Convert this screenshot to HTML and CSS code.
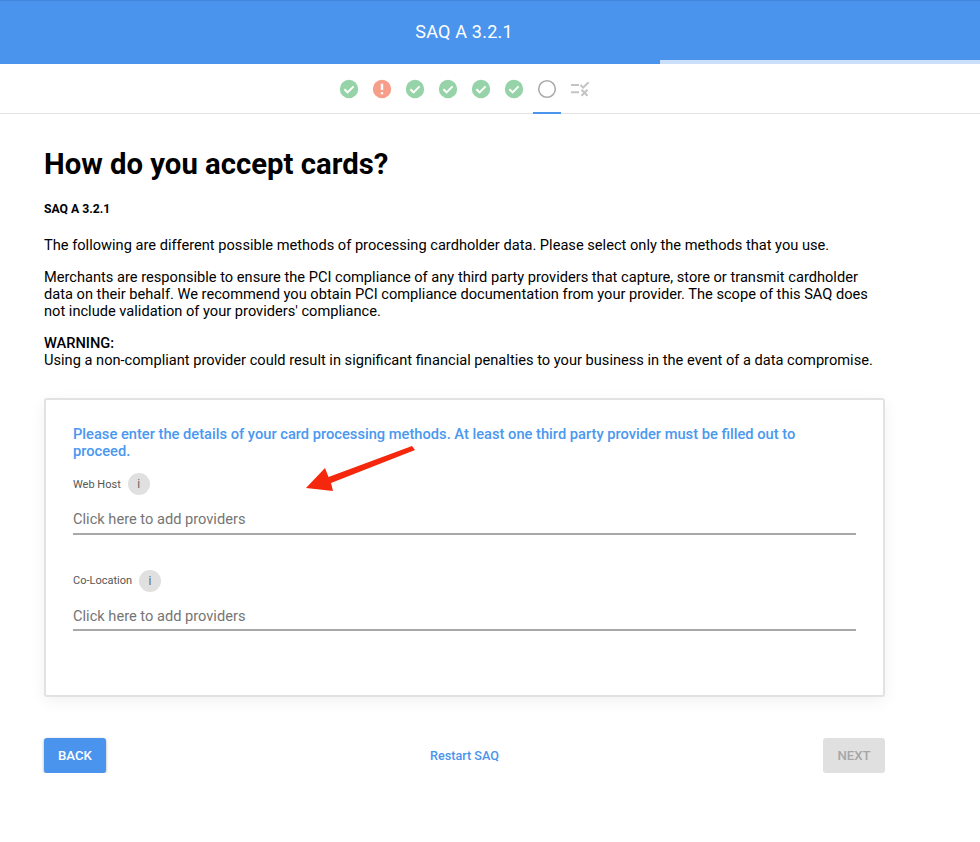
FILE: index.html
```html
<!DOCTYPE html>
<html lang="en">
<head>
    <meta charset="UTF-8">
    <meta name="viewport" content="width=device-width, initial-scale=1.0">
    <title>SAQ A 3.2.1</title>
    <link rel="stylesheet" href="styles.css">
</head>
<body>
    <header class="topbar">
        <div class="topbar-title">SAQ A 3.2.1</div>
        <div class="progress"><div class="progress-done"></div></div>
    </header>

    <nav class="stepper">
        <div class="step"><svg class="step-icon" viewBox="0 0 20 20"><circle class="fill-ok" cx="10" cy="10" r="9.2"/><path class="tick" d="M5.400 10.200l3.200 3.200 6-6"/></svg></div>
        <div class="step"><svg class="step-icon" viewBox="0 0 20 20"><circle class="fill-err" cx="10" cy="10" r="9.2"/><path class="bang" d="M10 4.800v6.200M10 13.200v2"/></svg></div>
        <div class="step"><svg class="step-icon" viewBox="0 0 20 20"><circle class="fill-ok" cx="10" cy="10" r="9.2"/><path class="tick" d="M5.400 10.200l3.200 3.200 6-6"/></svg></div>
        <div class="step"><svg class="step-icon" viewBox="0 0 20 20"><circle class="fill-ok" cx="10" cy="10" r="9.2"/><path class="tick" d="M5.400 10.200l3.200 3.200 6-6"/></svg></div>
        <div class="step"><svg class="step-icon" viewBox="0 0 20 20"><circle class="fill-ok" cx="10" cy="10" r="9.2"/><path class="tick" d="M5.400 10.200l3.200 3.200 6-6"/></svg></div>
        <div class="step"><svg class="step-icon" viewBox="0 0 20 20"><circle class="fill-ok" cx="10" cy="10" r="9.2"/><path class="tick" d="M5.400 10.200l3.200 3.200 6-6"/></svg></div>
        <div class="step step-current"><svg class="step-icon" viewBox="0 0 20 20"><circle class="ring" cx="10" cy="10" r="8.300"/></svg></div>
        <div class="step"><svg class="step-icon" viewBox="0 0 20 20"><path class="review" d="M1 6h8M1 13.300h8M10.500 6l2.600 2.600 5.500-5.300M11.500 10.800l6 6M17.500 10.800l-6 6"/></svg></div>
    </nav>

    <main class="content">
        <h1>How do you accept cards?</h1>
        <h5>SAQ A 3.2.1</h5>
        <p>The following are different possible methods of processing cardholder data. Please select only the methods that you use.</p>
        <p>Merchants are responsible to ensure the PCI compliance of any third party providers that capture, store or transmit cardholder data on their behalf. We recommend you obtain PCI compliance documentation from your provider. The scope of this SAQ does not include validation of your providers' compliance.</p>
        <p><strong>WARNING:</strong><br>Using a non-compliant provider could result in significant financial penalties to your business in the event of a data compromise.</p>

        <section class="card">
            <div class="card-intro">Please enter the details of your card processing methods. At least one third party provider must be filled out to proceed.</div>

            <div class="field">
                <div class="field-label">Web Host <span class="info">i</span></div>
                <div class="field-input">Click here to add providers</div>
            </div>

            <div class="field">
                <div class="field-label">Co-Location <span class="info">i</span></div>
                <div class="field-input">Click here to add providers</div>
            </div>

            <svg class="arrow" viewBox="0 0 112 48"><path d="M1 43L20 23l3.500 9L107 1l3 4-84 33 2 8z"/></svg>
        </section>

        <div class="actions">
            <a href="#" class="btn btn-back">BACK</a>
            <a href="#" class="restart">Restart SAQ</a>
            <a href="#" class="btn btn-next">NEXT</a>
        </div>
    </main>
</body>
</html>
```

FILE: styles.css
```css
body {
    font-family: Roboto, "Liberation Sans", sans-serif;
    background-color: #fff;
    color: #000;
    margin: 0;
    padding: 0;
}
.topbar {
    background-color: #4a94ed;
    height: 64px;
    box-sizing: border-box;
    border-top: 1px solid #4286dc;
    position: relative;
}
.topbar-title {
    color: #fff;
    font-size: 18px;
    line-height: 61px;
    text-align: center;
    letter-spacing: 0.2px;
    padding-right: 52px;
}
.progress {
    position: absolute;
    left: 0;
    right: 0;
    bottom: 0;
    height: 4px;
    background-color: #c9dffa;
}
.progress-done {
    width: 660px;
    height: 100%;
    background-color: #4a94ed;
}
.stepper {
    display: flex;
    justify-content: center;
    height: 49px;
    border-bottom: 1px solid #e4e4e4;
    padding-right: 52px;
}
.step {
    width: 33px;
    display: flex;
    align-items: center;
    justify-content: center;
    position: relative;
}
.step-icon {
    width: 20px;
    height: 20px;
}
.step-current::after {
    content: "";
    position: absolute;
    left: 3px;
    right: 2px;
    bottom: -1px;
    height: 2px;
    background-color: #4a94ed;
}
.fill-ok {
    fill: #97d3a8;
}
.fill-err {
    fill: #f79e8a;
}
.tick {
    fill: none;
    stroke: #fff;
    stroke-width: 2;
}
.bang {
    fill: none;
    stroke: #fff;
    stroke-width: 2.4;
}
.ring {
    fill: none;
    stroke: #ababab;
    stroke-width: 1.6;
}
.review {
    fill: none;
    stroke: #c4c4c4;
    stroke-width: 2;
}
.content {
    padding: 0 95px 0 44px;
}
h1 {
    font-size: 29.3px;
    font-weight: 700;
    line-height: 36px;
    margin: 32px 0 0;
}
h5 {
    font-size: 12.2px;
    font-weight: 700;
    line-height: 16px;
    margin: 19px 0 0;
}
p {
    font-size: 14.64px;
    line-height: 17.1px;
    margin: 15px 0 0;
}
h5 + p {
    margin-top: 20px;
}
strong {
    font-weight: 500;
}
.card {
    margin-top: 28px;
    height: 299px;
    box-sizing: border-box;
    border: 2px solid #e2e2e2;
    border-radius: 3px;
    box-shadow: 0 4px 16px rgba(0, 0, 0, 0.06);
    padding: 26px 27px 0;
    position: relative;
}
.card-intro {
    color: #4a98ef;
    font-size: 14.68px;
    font-weight: 500;
    line-height: 17.1px;
    max-width: 760px;
}
.field {
    margin-bottom: 34px;
}
.field-label {
    display: flex;
    align-items: center;
    gap: 7px;
    font-size: 11px;
    color: #555;
    height: 24px;
    margin-top: 12.5px;
}
.info {
    display: inline-block;
    width: 22px;
    height: 22px;
    line-height: 22px;
    border-radius: 50%;
    background-color: #e0e0e0;
    color: #666;
    text-align: center;
    font-size: 12px;
}
.field-input {
    font-size: 14.64px;
    color: #757575;
    line-height: 20px;
    padding: 13px 0 3.5px;
    border-bottom: 2px solid #a8a8a8;
}
.arrow {
    position: absolute;
    left: 259px;
    top: 45.4px;
    width: 112px;
    height: 48px;
    fill: #f5270c;
}
.actions {
    display: flex;
    justify-content: space-between;
    align-items: center;
    margin-top: 41px;
}
.btn {
    display: block;
    width: 62px;
    height: 35px;
    line-height: 35px;
    border-radius: 3px;
    text-align: center;
    text-decoration: none;
    font-size: 13.2px;
    font-weight: 500;
}
.btn-back {
    background-color: #4a94ed;
    color: #fff;
    box-shadow: 0 1px 3px rgba(0, 0, 0, 0.35);
}
.btn-next {
    background-color: #e0e0e0;
    color: #a6a6a6;
}
.restart {
    color: #4a94ed;
    font-size: 12.6px;
    font-weight: 500;
    text-decoration: none;
}
```
